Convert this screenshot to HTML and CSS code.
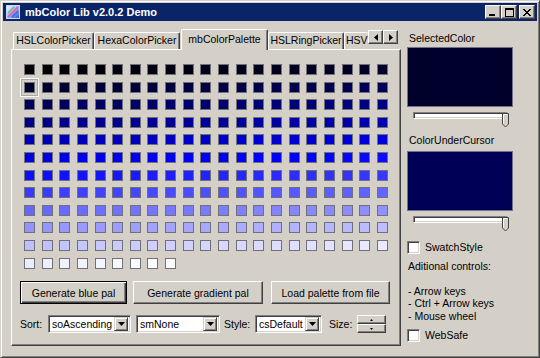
FILE: index.html
```html
<!DOCTYPE html>
<html>
<head>
<meta charset="utf-8">
<link rel="stylesheet" href="styles.css">
<script src="script.js" defer></script>
</head>
<body>
<div class="window">
  <div class="titlebar">
    <svg class="app-icon" viewBox="0 0 16 16" width="16" height="16">
      <defs>
        <linearGradient id="ig" x1="0" y1="0" x2="1" y2="1">
          <stop offset="0" stop-color="#ffffff"/>
          <stop offset="0.5" stop-color="#9ab8f0"/>
          <stop offset="1" stop-color="#2a50c8"/>
        </linearGradient>
      </defs>
      <rect x="1.5" y="1.5" width="13" height="13" fill="url(#ig)" stroke="#c8d8f8"/>
      <path d="M3 13 L13 3" stroke="#e060c0" stroke-width="2"/>
      <path d="M3 9 L9 3" stroke="#60c060" stroke-width="1.5"/>
      <path d="M7 13 L13 7" stroke="#4060e0" stroke-width="1.5"/>
    </svg>
    <span class="title">mbColor Lib v2.0.2 Demo</span>
    <div class="caption-btns">
      <div class="cbtn"><svg width="8" height="7" viewBox="0 0 8 7"><rect x="0" y="5" width="6" height="2" fill="#000"/></svg></div>
      <div class="cbtn"><svg width="9" height="9" viewBox="0 0 9 9"><rect x="0.5" y="0.5" width="8" height="8" fill="none" stroke="#000"/><rect x="0" y="0" width="9" height="2" fill="#000"/></svg></div>
      <div class="cbtn close"><svg width="8" height="7" viewBox="0 0 8 7"><path d="M0 0 L7 7 M1 0 L8 7 M7 0 L0 7 M8 0 L1 7" stroke="#000" stroke-width="1"/></svg></div>
    </div>
  </div>
  <div class="client">
    <div class="tabctl">
      <div class="tabstrip">
        <div class="tab t1">HSLColorPicker</div>
        <div class="tab t2">HexaColorPicker</div>
        <div class="tab t3 active">mbColorPalette</div>
        <div class="tab t4">HSLRingPicker</div>
        <div class="tab t5">HSV</div>
        <div class="tab-scroll">
          <div class="sbtn"><svg width="4" height="7" viewBox="0 0 4 7"><path d="M4 0 L0 3.5 L4 7 Z" fill="#000"/></svg></div>
          <div class="sbtn"><svg width="4" height="7" viewBox="0 0 4 7"><path d="M0 0 L4 3.5 L0 7 Z" fill="#000"/></svg></div>
        </div>
      </div>
      <div class="panel">
        <div class="palette" id="palette"></div>
        <div class="btnrow">
          <div class="btn default b1">Generate blue pal</div>
          <div class="btn b2">Generate gradient pal</div>
          <div class="btn b3">Load palette from file</div>
        </div>
        <div class="ctlrow">
          <span class="lbl l-sort">Sort:</span>
          <div class="combo c1"><span class="ctext">soAscending</span><div class="dd"><svg width="7" height="4" viewBox="0 0 7 4"><path d="M0 0 L7 0 L3.5 4 Z" fill="#000"/></svg></div></div>
          <div class="combo c2"><span class="ctext">smNone</span><div class="dd"><svg width="7" height="4" viewBox="0 0 7 4"><path d="M0 0 L7 0 L3.5 4 Z" fill="#000"/></svg></div></div>
          <span class="lbl l-style">Style:</span>
          <div class="combo c3"><span class="ctext">csDefault</span><div class="dd"><svg width="7" height="4" viewBox="0 0 7 4"><path d="M0 0 L7 0 L3.5 4 Z" fill="#000"/></svg></div></div>
          <span class="lbl l-size">Size:</span>
          <div class="spin">
            <div class="spbtn"><svg width="3" height="2" viewBox="0 0 3 2"><path d="M0 2 L1.5 0 L3 2 Z" fill="#000"/></svg></div>
            <div class="spbtn"><svg width="3" height="2" viewBox="0 0 3 2"><path d="M0 0 L3 0 L1.5 2 Z" fill="#000"/></svg></div>
          </div>
        </div>
      </div>
    </div>
    <div class="side">
      <div class="stext">SelectedColor</div>
      <div class="cbox sel-color"></div>
      <div class="slider">
        <div class="track"></div>
        <svg class="thumb" width="7" height="15" viewBox="0 0 7 15"><path d="M0.5 0.5 H6.5 V11 L3.5 14 L0.5 11 Z" fill="#d4d0c8" stroke="#404040"/><path d="M1.5 11 V1.5 H5.5" fill="none" stroke="#fff"/></svg>
      </div>
      <div class="stext under">ColorUnderCursor</div>
      <div class="cbox cur-color"></div>
      <div class="slider">
        <div class="track"></div>
        <svg class="thumb" width="7" height="15" viewBox="0 0 7 15"><path d="M0.5 0.5 H6.5 V11 L3.5 14 L0.5 11 Z" fill="#d4d0c8" stroke="#404040"/><path d="M1.5 11 V1.5 H5.5" fill="none" stroke="#fff"/></svg>
      </div>
      <div class="check c-swatch"><div class="cb"></div><span>SwatchStyle</span></div>
      <div class="info">
        <div>Aditional controls:</div>
        <div class="blank">&nbsp;</div>
        <div>- Arrow keys</div>
        <div>- Ctrl + Arrow keys</div>
        <div>- Mouse wheel</div>
      </div>
      <div class="check c-web"><div class="cb"></div><span>WebSafe</span></div>
    </div>
  </div>
</div>
</body>
</html>
```

FILE: script.js
```js
(function () {
  var pal = document.getElementById('palette');
  var N = 240, half = 120;
  for (var i = 0; i < N; i++) {
    var d = document.createElement('div');
    d.className = 'sw' + (i === 21 ? ' sel' : '');
    var r, g, b;
    if (i <= half) {
      r = 0; g = 0; b = Math.round(255 * i / half);
    } else {
      var c = Math.round(255 * (i - half) / half);
      r = c; g = c; b = 255;
    }
    d.style.background = 'rgb(' + r + ',' + g + ',' + b + ')';
    pal.appendChild(d);
  }
})();
```

FILE: styles.css
```css
* { box-sizing: border-box; }
body {
  margin: 0;
  background: #d4d0c8;
  font-family: "Liberation Sans", Arial, sans-serif;
  font-size: 10.5px;
  color: #000;
}
.window {
  width: 540px;
  height: 358px;
  border: 1px solid;
  border-color: #d4d0c8 #404040 #404040 #d4d0c8;
  box-shadow: inset 1px 1px #fff, inset -1px -1px #808080;
  padding: 2px;
  background: #d4d0c8;
  display: flex;
  flex-direction: column;
}
.titlebar {
  height: 18px;
  flex: none;
  background: #0a246a;
  display: flex;
  align-items: center;
  padding-left: 2px;
  color: #fff;
}
.app-icon { flex: none; }
.title {
  margin-left: 4px;
  font-weight: bold;
  font-size: 11px;
  flex: 1;
}
.caption-btns { display: flex; margin-right: 2px; }
.cbtn {
  width: 16px;
  height: 14px;
  background: #d4d0c8;
  border: 1px solid;
  border-color: #fff #404040 #404040 #fff;
  box-shadow: inset -1px -1px #808080;
  display: flex;
  align-items: center;
  justify-content: center;
}
.cbtn.close { margin-left: 2px; }

.client {
  flex: 1;
  display: flex;
  padding: 8px 0 0 8px;
}
.tabctl {
  width: 390px;
  flex: none;
  display: flex;
  flex-direction: column;
}
.tabstrip {
  height: 20px;
  display: flex;
  align-items: flex-end;
  padding-left: 2px;
  position: relative;
  z-index: 1;
}
.tab {
  flex: none;
  height: 17px;
  border: 1px solid;
  border-bottom: none;
  border-color: #fff #404040 #fff #fff;
  box-shadow: inset -1px 0 #808080;
  border-radius: 2px 2px 0 0;
  text-align: center;
  line-height: 15px;
  white-space: nowrap;
  overflow: hidden;
  background: #d4d0c8;
}
.t1 { width: 81px; }
.t2 { width: 86px; }
.t3 { width: 87px; margin-left: 1px; }
.t4 { width: 76px; }
.t5 { width: 24px; border-right: none; box-shadow: none; text-align: left; padding-left: 1px; }
.tab.active {
  height: 21px;
  margin-bottom: -1px;
  line-height: 18px;
}
.tab-scroll {
  display: flex;
  align-self: flex-start;
  margin-top: 1px;
}
.sbtn {
  width: 15px;
  height: 14px;
  border: 1px solid;
  border-color: #fff #404040 #404040 #fff;
  box-shadow: inset -1px -1px #808080;
  display: flex;
  align-items: center;
  justify-content: center;
}

.panel {
  height: 297px;
  border: 1px solid;
  border-color: #fff #404040 #404040 #fff;
  box-shadow: inset -1px -1px #808080;
  padding: 11px 0 0 9px;
}
.palette {
  display: grid;
  grid-template-columns: repeat(21, 17.65px);
  grid-auto-rows: 17.6px;
  height: 211.2px;
}
.sw {
  width: 11px;
  height: 11px;
  margin: 3px;
  border: 1px solid #707078;
}
.sw.sel {
  box-shadow: 0 0 0 2px #d4d0c8, 0 0 0 3px #a8a8a8, 0 0 0 4px #f8f8f8;
}

.btnrow {
  display: flex;
  margin: 9px 0 0 -1px;
}
.btn {
  height: 23px;
  border: 1px solid;
  border-color: #fff #404040 #404040 #fff;
  box-shadow: inset -1px -1px #808080;
  display: flex;
  align-items: center;
  justify-content: center;
  white-space: nowrap;
}
.btn.default {
  border-color: #000;
  box-shadow: inset 1px 1px #fff, inset -1px -1px #404040, inset -2px -2px #808080;
}
.b1 { width: 107px; }
.b2 { width: 130px; margin-left: 6px; }
.b3 { width: 119px; margin-left: 8px; }

.ctlrow {
  display: flex;
  align-items: center;
  height: 18px;
  margin: 11px 0 0 -1px;
}
.lbl { flex: none; white-space: nowrap; }
.l-sort { width: 28px; }
.l-style { width: 31px; margin-left: 4px; }
.l-size { width: 28px; margin-left: 7px; }
.combo {
  flex: none;
  height: 18px;
  border: 1px solid;
  border-color: #808080 #fff #fff #808080;
  box-shadow: inset 1px 1px #404040, inset -1px -1px #d4d0c8;
  background: #fff;
  display: flex;
  align-items: center;
  padding: 2px 2px 2px 3px;
}
.c1 { width: 83px; }
.c2 { width: 84px; margin-left: 5px; }
.c3 { width: 67px; }
.ctext { flex: 1; white-space: nowrap; overflow: hidden; }
.dd {
  flex: none;
  width: 14px;
  height: 14px;
  background: #d4d0c8;
  border: 1px solid;
  border-color: #d4d0c8 #404040 #404040 #d4d0c8;
  box-shadow: inset 1px 1px #fff, inset -1px -1px #808080;
  display: flex;
  align-items: center;
  justify-content: center;
}
.spin {
  width: 29px;
  height: 18px;
  display: flex;
  flex-direction: column;
}
.spbtn {
  height: 9px;
  border: 1px solid;
  border-color: #fff #404040 #404040 #fff;
  box-shadow: inset -1px -1px #808080;
  display: flex;
  align-items: center;
  justify-content: center;
}

.side {
  width: 106px;
  flex: none;
  margin-left: 6px;
  padding-top: 3px;
  line-height: 12.5px;
}
.stext { white-space: nowrap; padding-left: 2px; }
.cbox {
  height: 60px;
  margin-top: 2.5px;
  border: 1px solid #707088;
}
.sel-color { background: #00002d; }
.cur-color { background: #000057; margin-top: 4.5px; }
.under { margin-top: 5px; }
.slider {
  position: relative;
  height: 17px;
  margin-top: 5px;
}
.track {
  margin: 4px 0 0 6px;
  width: 95px;
  height: 7px;
  background: #fff;
  border: 1px solid;
  border-color: #808080 #fff #fff #808080;
  box-shadow: inset 1px 1px #404040, inset -1px -1px #d4d0c8;
}
.thumb {
  position: absolute;
  left: 95px;
  top: 1px;
}
.check {
  display: flex;
  align-items: center;
  gap: 5px;
  height: 13px;
  white-space: nowrap;
}
.c-swatch { margin-top: 8px; }
.c-web { margin-top: 6.75px; }
.cb {
  width: 13px;
  height: 13px;
  flex: none;
  background: #fff;
  border: 1px solid;
  border-color: #808080 #fff #fff #808080;
  box-shadow: inset 1px 1px #404040, inset -1px -1px #d4d0c8;
}
.info { margin-top: 5.75px; padding-left: 1px; white-space: nowrap; }
```
